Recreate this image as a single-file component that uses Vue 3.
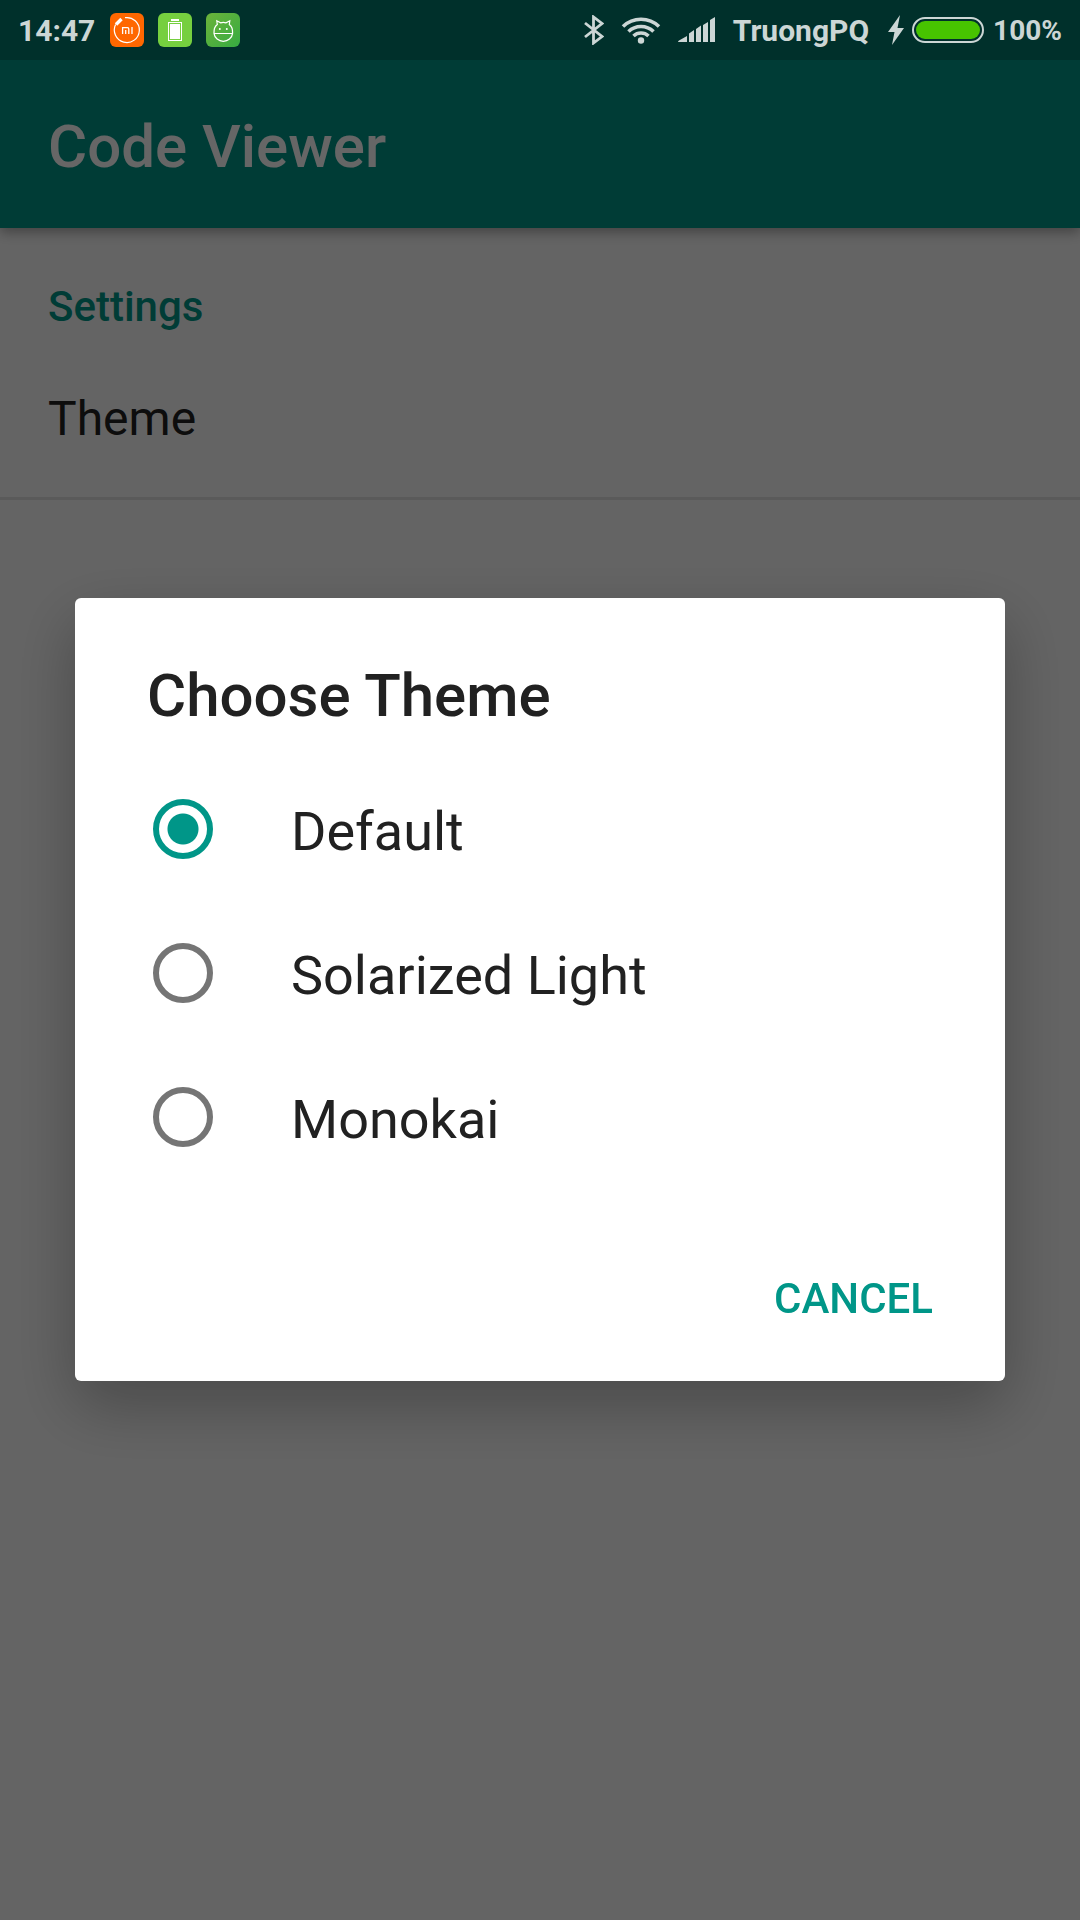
<script setup>
import { ref } from 'vue'

const themes = ['Default', 'Solarized Light', 'Monokai']
const selected = ref('Default')
const open = ref(true)
</script>

<template>
  <div class="screen">
    <div class="status-bar">
      <div class="status-left">
        <span class="time">14:47</span>
        <svg class="app-icon" viewBox="0 0 34 34" aria-hidden="true">
          <rect width="34" height="34" rx="6" fill="#ff6700" />
          <g fill="none" stroke="#fff">
            <path d="M15 4.7A12.5 12.5 0 1 1 5.6 11.6" stroke-width="1.2" />
            <path d="M6 11.5L11.5 6" stroke-width="3.4" />
            <path d="M12.6 21V14.6H17.5Q18.8 14.6 18.8 16V21M15.7 17V21M22 14V21" stroke-width="1.3" />
          </g>
        </svg>
        <svg class="app-icon" viewBox="0 0 34 34" aria-hidden="true">
          <rect width="34" height="34" rx="6" fill="#76cf3f" />
          <rect x="13" y="6" width="8" height="2" fill="#fff" />
          <rect x="10.5" y="9.5" width="13" height="18" fill="none" stroke="#fff" />
          <rect x="12" y="11" width="10" height="15" fill="#fff" />
        </svg>
        <svg class="app-icon" viewBox="0 0 34 34" aria-hidden="true">
          <defs>
            <linearGradient id="leaf" x1="0" y1="0" x2="1" y2="1">
              <stop offset="0" stop-color="#6cb33a" />
              <stop offset="1" stop-color="#36ab42" />
            </linearGradient>
          </defs>
          <rect width="34" height="34" rx="6" fill="url(#leaf)" />
          <path
            d="M8 20.3C7.8 16 9.3 13 11.3 11.6L10.8 7.8L14.6 9.8Q17.3 9 20 9.8L23.8 7.8L23.3 11.6C25.3 13 26.8 16 26.6 20.3C26 25 22 28.3 17.3 28.3S8.6 25 8 20.3ZM8 20.5H26.6"
            fill="none" stroke="#fff" stroke-width="1.2" />
          <circle cx="13.8" cy="16" r="1" fill="#fff" />
          <circle cx="20.8" cy="16" r="1" fill="#fff" />
        </svg>
      </div>
      <div class="status-right">
        <svg class="bluetooth" viewBox="0 0 20 30" aria-hidden="true">
          <path d="M1 8L18 21.5L9.5 28V2L18 8.5L1 22" fill="none" stroke="currentColor" stroke-width="2.8" />
        </svg>
        <svg class="wifi" viewBox="0 0 40 28" aria-hidden="true">
          <g fill="none" stroke="currentColor" stroke-width="3.6">
            <path d="M2 10.5A26 26 0 0 1 38 10.5" />
            <path d="M7.5 15.5A18 18 0 0 1 32.5 15.5" />
            <path d="M12.5 20A11 11 0 0 1 27.5 20" />
          </g>
          <circle cx="20" cy="24.5" r="3.2" fill="currentColor" />
        </svg>
        <svg class="signal" viewBox="0 0 38 26" aria-hidden="true">
          <path
            d="M0 25Q0 24 1 23.5L9 19V25ZM11 25V16.5L16 13V25ZM18 25V12L23 8.5V25ZM25 25V8L30 5V25ZM32 25V3L37 0V25Z"
            fill="currentColor" />
        </svg>
        <span class="carrier">TruongPQ</span>
        <svg class="bolt" viewBox="0 0 16 30" aria-hidden="true">
          <path d="M12 0L0 17H6.5L4 30L16 13H9.5Z" fill="currentColor" />
        </svg>
        <svg class="battery" viewBox="0 0 72 26" aria-hidden="true">
          <rect x="1" y="1" width="70" height="24" rx="12" fill="none" stroke="currentColor" stroke-width="2" />
          <rect x="4" y="4" width="64" height="18" rx="9" fill="#47c400" />
        </svg>
        <span class="percent">100%</span>
      </div>
    </div>

    <header class="app-bar">
      <h1>Code Viewer</h1>
    </header>

    <main>
      <h2 class="section">Settings</h2>
      <button class="preference" type="button" @click="open = true">Theme</button>
    </main>

    <div v-if="open" class="scrim">
      <div class="dialog" role="dialog" aria-modal="true" aria-labelledby="dialog-title">
        <h2 id="dialog-title">Choose Theme</h2>
        <label v-for="theme in themes" :key="theme" class="option">
          <input v-model="selected" type="radio" name="theme" :value="theme" />
          <span>{{ theme }}</span>
        </label>
        <div class="actions">
          <button class="cancel" type="button" @click="open = false">CANCEL</button>
        </div>
      </div>
    </div>
  </div>
</template>

<style>
body {
  margin: 0;
  background: #fafafa;
}
</style>

<style scoped>
.screen {
  min-height: 100vh;
  background: #fafafa;
  color: #212121;
  font-family: Roboto, "Noto Sans", sans-serif;
}

h1,
h2 {
  margin: 0;
  font-weight: 500;
}

svg {
  display: block;
  flex: none;
}

button {
  margin: 0;
  border: 0;
  background: none;
  font-family: inherit;
  cursor: pointer;
}

.status-bar {
  position: relative;
  z-index: 2;
  display: flex;
  align-items: center;
  justify-content: space-between;
  box-sizing: border-box;
  height: 60px;
  padding: 0 18px;
  background: #00302b;
  color: #ccd6d5;
  font-size: 30px;
  font-weight: 700;
}

.status-left,
.status-right {
  display: flex;
  align-items: center;
}

.status-left {
  gap: 14px;
}

.time {
  margin-right: 1px;
}

.app-icon {
  width: 34px;
  height: 34px;
}

.bluetooth {
  width: 20px;
  height: 30px;
  margin-right: 17px;
}

.wifi {
  width: 40px;
  height: 28px;
  margin-right: 17px;
}

.signal {
  width: 38px;
  height: 26px;
  margin-right: 17px;
}

.carrier {
  margin-right: 19px;
}

.bolt {
  width: 16px;
  height: 30px;
  margin-right: 8px;
}

.battery {
  width: 72px;
  height: 26px;
  margin-right: 9px;
}

.percent {
  font-size: 28px;
}

.app-bar {
  position: relative;
  display: flex;
  align-items: center;
  box-sizing: border-box;
  height: 168px;
  padding: 5px 48px 0;
  background: #009688;
  color: #fff;
  box-shadow: 0 4px 12px rgba(0, 0, 0, 0.35);
}

h1 {
  font-size: 60px;
  line-height: 72px;
}

.section {
  padding: 54px 48px 0;
  color: #009688;
  font-size: 42px;
  line-height: 50px;
}

.preference {
  display: block;
  width: 100%;
  padding: 59px 48px 50px;
  border-bottom: 3px solid #e1e1e1;
  color: #222;
  font-size: 48px;
  line-height: 56px;
  text-align: left;
}

.scrim {
  position: fixed;
  inset: 0;
  z-index: 1;
  display: flex;
  align-items: center;
  padding: 60px 75px 1px;
  background: rgba(0, 0, 0, 0.6);
}

.dialog {
  flex: 1;
  padding: 62px 72px 45px;
  border-radius: 6px;
  background: #fff;
  box-shadow: 0 24px 64px rgba(0, 0, 0, 0.28);
}

.dialog h2 {
  padding-bottom: 25px;
  font-size: 60px;
  line-height: 72px;
}

.option {
  display: flex;
  align-items: center;
  gap: 78px;
  height: 144px;
  padding-left: 6px;
  font-size: 54px;
  cursor: pointer;
}

.option span {
  padding-top: 5px;
}

.option input {
  appearance: none;
  flex: none;
  width: 60px;
  height: 60px;
  margin: 0;
  border: 6px solid #757575;
  border-radius: 50%;
}

.option input:checked {
  border-color: #009688;
  background: radial-gradient(circle, #009688 15px, #fff 16px);
}

.actions {
  display: flex;
  justify-content: flex-end;
  padding-top: 73px;
}

.cancel {
  padding: 12px 0;
  color: #009688;
  font-size: 42px;
  font-weight: 500;
  line-height: 50px;
}
</style>
